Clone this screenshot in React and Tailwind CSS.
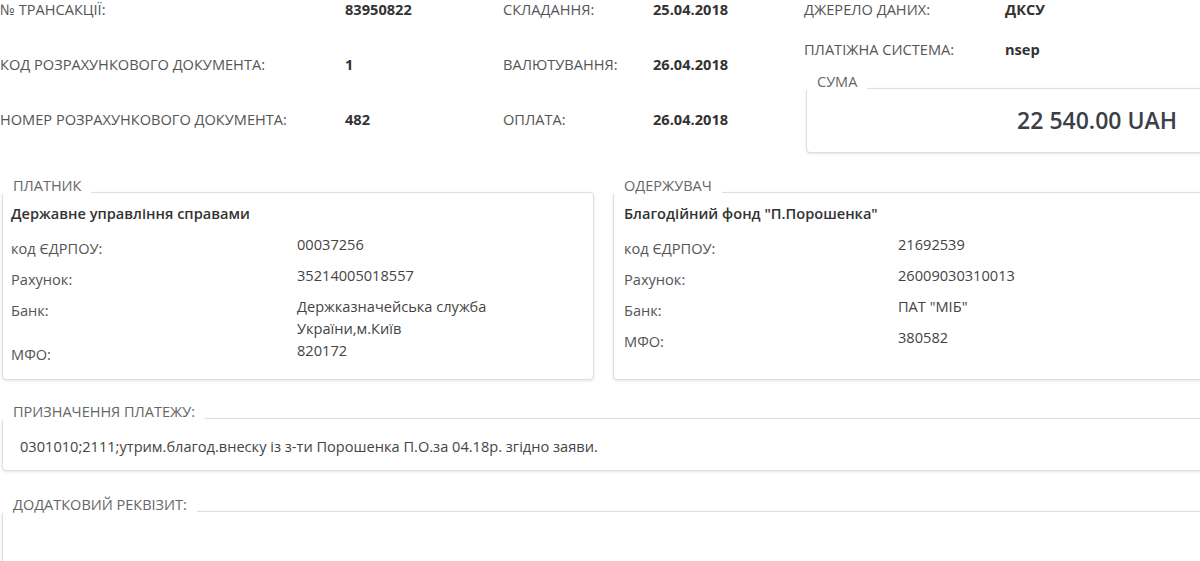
import React from "react";

const Legend = ({ children }) => (
  <span className="absolute left-0 -top-[15px] bg-white px-[10px] text-[14.5px] leading-[16px] uppercase text-[#666]">
    {children}
  </span>
);

const Box = ({ title, className = "", children }) => (
  <div
    className={`relative rounded-[4px] border border-[#dedede] bg-white shadow-[0_1px_3px_rgba(0,0,0,0.1)] ${className}`}
  >
    <Legend>{title}</Legend>
    {children}
  </div>
);

const Row = ({ label, labelWidth, children }) => (
  <div className="flex min-h-[31px]">
    <div className={`${labelWidth} pt-[4px] leading-[22px] text-[#555]`}>{label}</div>
    <div className="leading-[22px] text-[#444]">{children}</div>
  </div>
);

const topRows = [
  ["№ ТРАНСАКЦІЇ:", "83950822", "СКЛАДАННЯ:", "25.04.2018"],
  ["КОД РОЗРАХУНКОВОГО ДОКУМЕНТА:", "1", "ВАЛЮТУВАННЯ:", "26.04.2018"],
  ["НОМЕР РОЗРАХУНКОВОГО ДОКУМЕНТА:", "482", "ОПЛАТА:", "26.04.2018"],
];

export default function App() {
  return (
    <div className="h-[561px] w-[1200px] overflow-hidden bg-white font-['Open_Sans',sans-serif] text-[14.6px]">
      <div className="w-[1215px]">
        {/* верхній блок */}
        <div className="flex items-start">
          <div className="grid w-[804px] grid-cols-[345px_158px_150px_151px] gap-y-[37px] leading-[18px]">
            {topRows.map((r, i) => (
              <React.Fragment key={i}>
                <span className="text-[#555]">{r[0]}</span>
                <span className="font-bold text-[#333]">{r[1]}</span>
                <span className="text-[#555]">{r[2]}</span>
                <span className="font-bold text-[#333]">{r[3]}</span>
              </React.Fragment>
            ))}
          </div>
          <div className="flex-1">
            <div className="flex leading-[18px]">
              <span className="w-[201px] text-[#555]">ДЖЕРЕЛО ДАНИХ:</span>
              <span className="font-bold text-[#333]">ДКСУ</span>
            </div>
            <div className="mt-[22px] flex leading-[18px]">
              <span className="w-[201px] text-[#555]">ПЛАТІЖНА СИСТЕМА:</span>
              <span className="font-bold text-[#333]">nsep</span>
            </div>
            <Box title="СУМА" className="ml-[2px] mt-[30px] flex h-[65px] items-center justify-end pr-[37px]">
              <span className="text-[23px] font-semibold text-[#3b4046]">22 540.00 UAH</span>
            </Box>
          </div>
        </div>

        {/* платник / одержувач */}
        <div className="mt-[39px] flex">
          <Box title="ПЛАТНИК" className="ml-[2px] h-[188px] w-[592px] pl-[8px] pt-[9px]">
            <div className="font-semibold leading-[22px] text-[#333]">Державне управління справами</div>
            <div className="mt-[9px]">
              <Row label="код ЄДРПОУ:" labelWidth="w-[286px]">00037256</Row>
              <Row label="Рахунок:" labelWidth="w-[286px]">35214005018557</Row>
              <Row label="Банк:" labelWidth="w-[286px]">
                Держказначейська служба
                <br />
                України,м.Київ
              </Row>
              <Row label="МФО:" labelWidth="w-[286px]">820172</Row>
            </div>
          </Box>
          <Box title="ОДЕРЖУВАЧ" className="ml-[19px] h-[188px] flex-1 pl-[10px] pt-[9px]">
            <div className="font-semibold leading-[22px] text-[#333]">Благодійний фонд "П.Порошенка"</div>
            <div className="mt-[9px]">
              <Row label="код ЄДРПОУ:" labelWidth="w-[274px]">21692539</Row>
              <Row label="Рахунок:" labelWidth="w-[274px]">26009030310013</Row>
              <Row label="Банк:" labelWidth="w-[274px]">ПАТ "МІБ"</Row>
              <Row label="МФО:" labelWidth="w-[274px]">380582</Row>
            </div>
          </Box>
        </div>

        <Box title="ПРИЗНАЧЕННЯ ПЛАТЕЖУ:" className="ml-[2px] mt-[38px] h-[53px] pl-[17px] pt-[16px]">
          <div className="leading-[22px] text-[#444]">
            0301010;2111;утрим.благод.внеску із з-ти Порошенка П.О.за 04.18р. згідно заяви.
          </div>
        </Box>

        <Box title="ДОДАТКОВИЙ РЕКВІЗИТ:" className="ml-[2px] mt-[40px] h-[80px]" />
      </div>
    </div>
  );
}
